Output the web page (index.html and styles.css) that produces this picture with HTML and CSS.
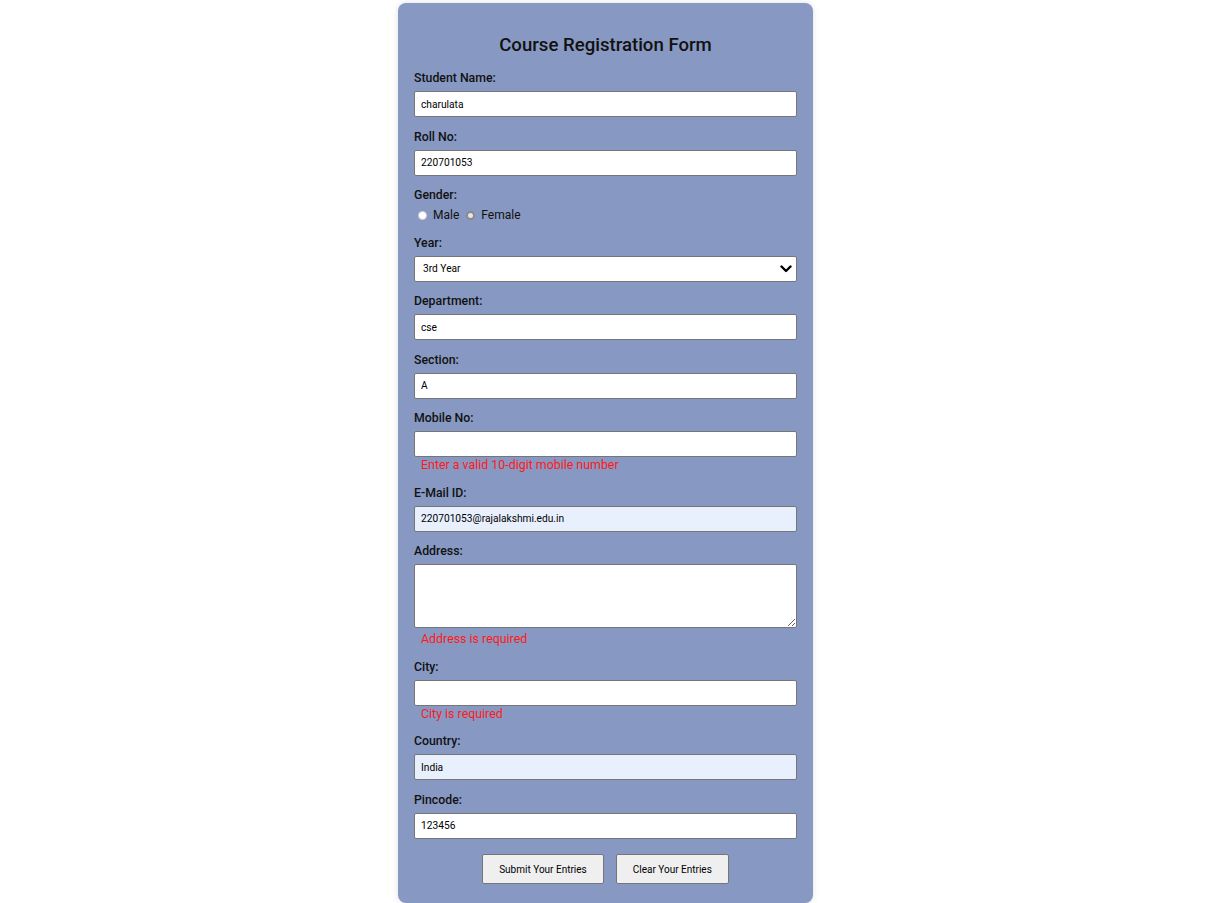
FILE: index.html
```html
<!DOCTYPE html>
<html lang="en">
<head>
<meta charset="utf-8">
<title>Course Registration Form</title>
<link rel="stylesheet" href="styles.css">
</head>
<body>
<form class="card">
  <h2 class="title">Course Registration Form</h2>

  <div class="field">
    <label class="lbl">Student Name:</label>
    <input class="inp" type="text" value="charulata">
  </div>

  <div class="field">
    <label class="lbl">Roll No:</label>
    <input class="inp" type="text" value="220701053">
  </div>

  <div class="field">
    <label class="lbl lbl-tight">Gender:</label>
    <div class="radios">
      <span class="radio"></span><span class="rtext">Male</span>
      <span class="radio radio-alt"></span><span class="rtext">Female</span>
    </div>
  </div>

  <div class="field">
    <label class="lbl">Year:</label>
    <div class="select-wrap">
      <select class="inp sel"><option>3rd Year</option></select>
      <svg class="chev" width="12" height="8" viewBox="0 0 12 8"><path d="M1.5 1.5 L6 6 L10.5 1.5" fill="none" stroke="#000" stroke-width="2.4" stroke-linecap="round" stroke-linejoin="round"/></svg>
    </div>
  </div>

  <div class="field">
    <label class="lbl">Department:</label>
    <input class="inp" type="text" value="cse">
  </div>

  <div class="field">
    <label class="lbl">Section:</label>
    <input class="inp" type="text" value="A">
  </div>

  <div class="field">
    <label class="lbl">Mobile No:</label>
    <input class="inp" type="text" value="">
    <div class="err">Enter a valid 10-digit mobile number</div>
  </div>

  <div class="field">
    <label class="lbl">E-Mail ID:</label>
    <input class="inp autofill" type="text" value="220701053@rajalakshmi.edu.in">
  </div>

  <div class="field">
    <label class="lbl">Address:</label>
    <textarea class="inp area"></textarea>
    <div class="err err-area">Address is required</div>
  </div>

  <div class="field">
    <label class="lbl">City:</label>
    <input class="inp" type="text" value="">
    <div class="err">City is required</div>
  </div>

  <div class="field">
    <label class="lbl">Country:</label>
    <input class="inp autofill" type="text" value="India">
  </div>

  <div class="field field-last">
    <label class="lbl">Pincode:</label>
    <input class="inp" type="text" value="123456">
  </div>

  <div class="actions">
    <button type="button" class="btn">Submit Your Entries</button>
    <button type="button" class="btn">Clear Your Entries</button>
  </div>
</form>
</body>
</html>
```
FILE: styles.css
```css
html, body {
  margin: 0;
  padding: 0;
  background: #ffffff;
}

body {
  font-family: Roboto, "Liberation Sans", Arial, sans-serif;
  color: #111;
  padding: 3px 5px 0 0;
}

.card {
  box-sizing: border-box;
  width: 415px;
  margin: 0 auto;
  background: #8798c2;
  border-radius: 8px;
  box-shadow: 0 0 6px rgba(0, 0, 0, 0.12);
  padding: 30px 16px 19px;
}

.title {
  margin: 0 0 13px;
  text-align: center;
  font-size: 18.6px;
  line-height: 24px;
  font-weight: 500;
  color: #111;
}

.field {
  margin-bottom: 11.5px;
}

.field-last {
  margin-bottom: 0;
}

.lbl {
  display: block;
  font-size: 12.3px;
  line-height: 16px;
  font-weight: 500;
  margin-bottom: 5px;
}

.lbl-tight {
  margin-bottom: 4px;
}

.inp {
  display: block;
  box-sizing: border-box;
  width: 100%;
  height: 26px;
  margin: 0;
  padding: 0 6px;
  border: 1px solid #767676;
  border-radius: 2px;
  background: #fff;
  font-family: Roboto, "Liberation Sans", Arial, sans-serif;
  font-size: 10.2px;
  color: #000;
  outline: none;
}

.autofill {
  background: #e8f0fe;
}

.area {
  height: 64px;
  padding: 4px 6px;
  resize: vertical;
}

.select-wrap {
  position: relative;
}

.sel {
  appearance: none;
  -webkit-appearance: none;
  padding-left: 8px;
}

.chev {
  position: absolute;
  right: 5px;
  top: 9px;
  pointer-events: none;
}

.radios {
  display: flex;
  align-items: center;
  height: 16px;
  padding-left: 4px;
}

.radio {
  box-sizing: border-box;
  width: 9px;
  height: 9px;
  border-radius: 50%;
  background: #fff;
  border: 1px solid #d0d0d0;
  margin-right: 6px;
}

.radio-alt {
  background: #e6e6e6;
  border: 2px solid #8a8a8a;
  margin-left: 7px;
}

.rtext {
  font-size: 12px;
  line-height: 16px;
}

.err {
  color: #ff1a1a;
  font-size: 12.4px;
  line-height: 16px;
  padding-left: 7px;
}

.err-area {
  margin-top: 3px;
}

.actions {
  display: flex;
  justify-content: center;
  gap: 12px;
  margin-top: 15.5px;
}

.btn {
  box-sizing: border-box;
  height: 30px;
  padding: 0 16px;
  background: #efefef;
  border: 1px solid #767676;
  border-radius: 2px;
  font-family: Roboto, "Liberation Sans", Arial, sans-serif;
  font-size: 10px;
  color: #000;
}
```
